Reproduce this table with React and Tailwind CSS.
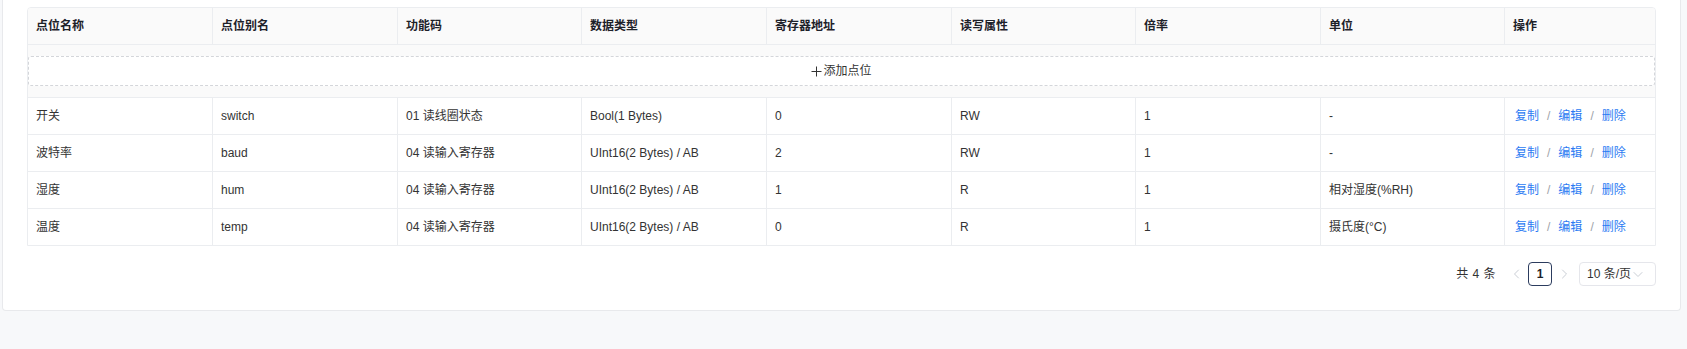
import React from "react";

const headers = ["点位名称", "点位别名", "功能码", "数据类型", "寄存器地址", "读写属性", "倍率", "单位", "操作"];

const rows = [
  ["开关", "switch", "01 读线圈状态", "Bool(1 Bytes)", "0", "RW", "1", "-"],
  ["波特率", "baud", "04 读输入寄存器", "UInt16(2 Bytes) / AB", "2", "RW", "1", "-"],
  ["湿度", "hum", "04 读输入寄存器", "UInt16(2 Bytes) / AB", "1", "R", "1", "相对湿度(%RH)"],
  ["温度", "temp", "04 读输入寄存器", "UInt16(2 Bytes) / AB", "0", "R", "1", "摄氏度(°C)"],
];

const grid = "grid grid-cols-[185px_185px_184px_185px_185px_184px_185px_184px_1fr]";

function Chevron({ dir = "right", className = "" }) {
  const d =
    dir === "right" ? "M1.5 1 L5.5 5 L1.5 9" : dir === "left" ? "M5.5 1 L1.5 5 L5.5 9" : "M1 1.5 L5 5.5 L9 1.5";
  const w = dir === "down" ? 10 : 7;
  const h = dir === "down" ? 7 : 10;
  return (
    <svg width={w} height={h} viewBox={`0 0 ${w} ${h}`} className={className} fill="none">
      <path d={d} stroke="currentColor" strokeWidth="1" strokeLinecap="round" strokeLinejoin="round" />
    </svg>
  );
}

export default function App() {
  return (
    <div className="w-[1687px] h-[349px] bg-[#f7f8fa] overflow-hidden font-['Liberation_Sans','Noto_Sans_CJK_SC',sans-serif] text-[12px]">
      <div className="ml-[2px] w-[1679px] bg-white border border-t-0 border-[#e8e9ec] rounded-b-[4px] px-6 pt-[7px] pb-6">
        <div className="border border-[#ebedf0] rounded-t-[4px] overflow-hidden">
          <div className={`${grid} bg-[#fafafa] border-b border-[#ebedf0]`}>
            {headers.map((h, i) => (
              <div
                key={h}
                className={`h-9 px-2 flex items-center font-semibold text-[#1d2129] ${i < 8 ? "border-r border-[#ebedf0]" : ""}`}
              >
                {h}
              </div>
            ))}
          </div>
          <div className="bg-[#fafafa] border-b border-[#ebedf0] pt-[11px] pb-[11px]">
            <div className="h-[30px] bg-white border border-dashed border-[#d4d6da] rounded-[3px] flex items-center justify-center text-[#333]">
              <svg width="11" height="11" viewBox="0 0 11 11" className="mr-[1px]" fill="none">
                <path d="M5.5 0.5 V10.5 M0.5 5.5 H10.5" stroke="#333" strokeWidth="1" />
              </svg>
              <span>添加点位</span>
            </div>
          </div>
          {rows.map((r, ri) => (
            <div key={ri} className={`${grid} ${ri < rows.length - 1 ? "border-b border-[#ebedf0]" : ""}`}>
              {r.map((c, ci) => (
                <div key={ci} className="h-9 px-2 flex items-center text-[#333] border-r border-[#ebedf0]">
                  {c}
                </div>
              ))}
              <div className="h-9 pl-[10px] flex items-center text-[#2b7bf3]">
                <span>复制</span>
                <span className="mx-2 text-[#9ea2a9]">/</span>
                <span>编辑</span>
                <span className="mx-2 text-[#9ea2a9]">/</span>
                <span>删除</span>
              </div>
            </div>
          ))}
        </div>
        <div className="mt-4 flex items-center justify-end h-6 text-[#333]">
          <span className="mr-2 tracking-[0.5px]">共 4 条</span>
          <div className="w-6 h-6 flex items-center justify-center text-[#c9cdd4]">
            <Chevron dir="left" />
          </div>
          <div className="w-6 h-6 flex items-center justify-center border border-[#2c3c5e] rounded-[4px] font-semibold text-[#1d2129]">
            1
          </div>
          <div className="w-6 h-6 flex items-center justify-center text-[#c9cdd4]">
            <Chevron dir="right" />
          </div>
          <div className="ml-[3px] w-[77px] h-6 border border-[#e5e6eb] rounded-[4px] flex items-center justify-between pl-[7px] pr-[12px]">
            <span>10 条/页</span>
            <Chevron dir="down" className="text-[#c9cdd4]" />
          </div>
        </div>
      </div>
    </div>
  );
}
